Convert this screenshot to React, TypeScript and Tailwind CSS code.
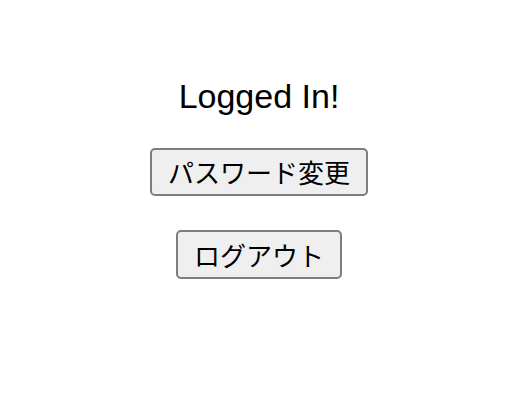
export default function App() {
  return (
    <div className="flex min-h-[418px] flex-col items-center bg-white pt-[76px] font-['Liberation_Sans','Noto_Sans_CJK_JP',sans-serif] text-black">
      <h1 className="text-[34px] leading-[40px]">Logged In!</h1>
      <button className="mt-[32px] h-[48px] rounded-[5px] border-2 border-[#7d7d7d] bg-[#efefef] px-4 font-['Noto_Sans_CJK_JP',sans-serif] text-[26px] leading-none">
        パスワード変更
      </button>
      <button className="mt-[34px] h-[49px] rounded-[5px] border-2 border-[#7d7d7d] bg-[#efefef] px-4 font-['Noto_Sans_CJK_JP',sans-serif] text-[26px] leading-none">
        ログアウト
      </button>
    </div>
  );
}
